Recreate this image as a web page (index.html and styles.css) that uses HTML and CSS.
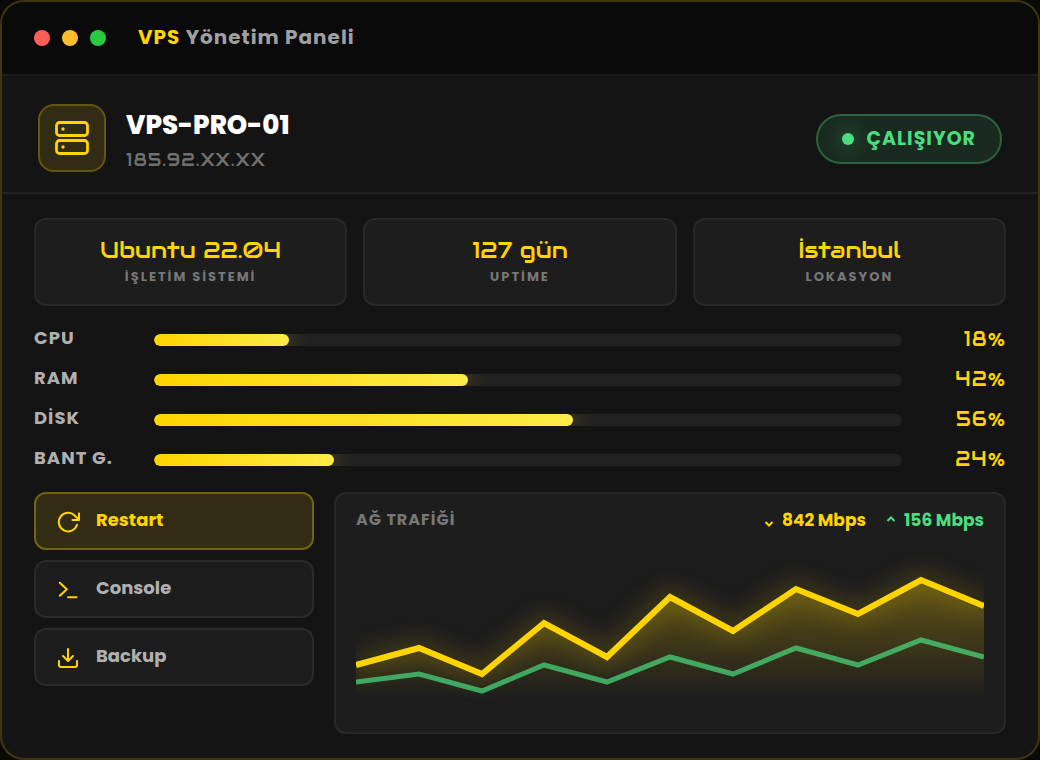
FILE: index.html
```
<!DOCTYPE html>
<html lang="tr">
<head>
<meta charset="utf-8">
<meta name="viewport" content="width=device-width, initial-scale=1">
<title>VPS Yönetim Paneli</title>
<link rel="stylesheet" href="styles.css">
</head>
<body>
<main class="panel">
  <header class="titlebar">
    <div class="dots"><span class="dot dot-red"></span><span class="dot dot-amber"></span><span class="dot dot-green"></span></div>
    <h1 class="title"><span class="accent">VPS</span> Yönetim Paneli</h1>
  </header>

  <section class="server">
    <div class="server-icon">
      <svg width="40" height="40" viewBox="0 0 40 40" fill="none" stroke="currentColor" stroke-width="2.8" stroke-linejoin="round" aria-hidden="true">
        <rect x="4.500" y="4.500" width="31" height="13" rx="3"/>
        <rect x="4.500" y="22.500" width="31" height="13" rx="3"/>
        <circle cx="11" cy="11" r="1.700" fill="currentColor" stroke="none"/>
        <circle cx="11" cy="29" r="1.700" fill="currentColor" stroke="none"/>
      </svg>
    </div>
    <div class="server-text">
      <h2 class="server-name">VPS-PRO-01</h2>
      <p class="server-ip">185.92.XX.XX</p>
    </div>
    <div class="status"><span class="status-dot"></span><span class="status-label">ÇALIŞIYOR</span></div>
  </section>

  <div class="content">
    <section class="stats">
      <div class="card stat"><p class="stat-value">Ubuntu 22.04</p><p class="stat-label">İŞLETİM SİSTEMİ</p></div>
      <div class="card stat"><p class="stat-value">127 gün</p><p class="stat-label">UPTİME</p></div>
      <div class="card stat"><p class="stat-value">İstanbul</p><p class="stat-label">LOKASYON</p></div>
    </section>

    <section class="meters">
      <div class="meter-row"><span class="meter-label" id="m-cpu">CPU</span><div class="track" role="progressbar" aria-labelledby="m-cpu" aria-valuenow="18"><div class="fill" style="width:18%"></div></div><span class="meter-value">18%</span></div>
      <div class="meter-row"><span class="meter-label" id="m-ram">RAM</span><div class="track" role="progressbar" aria-labelledby="m-ram" aria-valuenow="42"><div class="fill" style="width:42%"></div></div><span class="meter-value">42%</span></div>
      <div class="meter-row"><span class="meter-label" id="m-disk">DİSK</span><div class="track" role="progressbar" aria-labelledby="m-disk" aria-valuenow="56"><div class="fill" style="width:56%"></div></div><span class="meter-value">56%</span></div>
      <div class="meter-row"><span class="meter-label" id="m-net">BANT G.</span><div class="track" role="progressbar" aria-labelledby="m-net" aria-valuenow="24"><div class="fill" style="width:24%"></div></div><span class="meter-value">24%</span></div>
    </section>

    <section class="bottom">
      <div class="actions">
        <button type="button" class="action action-primary">
          <svg class="action-icon" viewBox="0 0 24 24" aria-hidden="true"><path d="M23 3.500v6.500h-6.500M21 14.800A9.300 9.300 0 1 1 18.700 5.500L23 10"/></svg>
          <span>Restart</span>
        </button>
        <button type="button" class="action">
          <svg class="action-icon" viewBox="0 0 24 24" aria-hidden="true"><path d="M3.800 4.800l7 6.500-7 6.500M12 19.200h8.500"/></svg>
          <span>Console</span>
        </button>
        <button type="button" class="action">
          <svg class="action-icon" viewBox="0 0 24 24" aria-hidden="true"><path d="M3 15v4a2 2 0 0 0 2 2h14a2 2 0 0 0 2-2V15M7 10l5 5 5-5M12 15V3"/></svg>
          <span>Backup</span>
        </button>
      </div>

      <div class="card chart-card">
        <div class="chart-head">
          <h3 class="chart-title">AĞ TRAFİĞİ</h3>
          <div class="rates">
            <span class="rate rate-down"><svg class="chevron" viewBox="0 0 10 20" aria-hidden="true"><path d="M1.500 12L5 15.500 8.500 12"/></svg>842 Mbps</span>
            <span class="rate rate-up"><svg class="chevron" viewBox="0 0 10 20" aria-hidden="true"><path d="M1.500 11L5 7.500 8.500 11"/></svg>156 Mbps</span>
          </div>
        </div>
        <svg class="chart" viewBox="0 0 628 170" preserveAspectRatio="none" role="img" aria-label="Ağ trafiği">
          <defs>
            <linearGradient id="area" x1="0" y1="0" x2="0" y2="1">
              <stop offset="0" stop-color="#ffd500" stop-opacity=".3"/>
              <stop offset="1" stop-color="#ffd500" stop-opacity="0"/>
            </linearGradient>
          </defs>
          <path fill="url(#area)" d="M0 123L63 106 126 132 188 81 251 115 314 55 377 89 440 47 502 72 565 38 628 64V157H0Z"/>
          <path class="line line-down" d="M0 123L63 106 126 132 188 81 251 115 314 55 377 89 440 47 502 72 565 38 628 64"/>
          <path class="line line-up" d="M0 140L63 132 126 149 188 123 251 140 314 115 377 132 440 106 502 123 565 98 628 115"/>
        </svg>
      </div>
    </section>
  </div>
</main>
</body>
</html>
```
FILE: styles.css
```
:root {
  --yellow: #ffd500;
  --green: #4ade80;
  --sans: Poppins, Inter, "Liberation Sans", sans-serif;
  --wide: Audiowide, Orbitron, "DejaVu Sans", sans-serif;
}
* { box-sizing: border-box; }
body, h1, h2, h3, p { margin: 0; }
body {
  background: #0a0905;
  color: #fff;
  font-family: var(--sans);
}
.panel {
  display: flex;
  flex-direction: column;
  min-height: 100vh;
  border: 2px solid #40370f;
  border-radius: 24px;
  background: #141414;
  overflow: hidden;
}

.titlebar {
  display: flex;
  align-items: center;
  gap: 32px;
  padding: 20px 32px 22px;
  background: #0a0a0a;
  border-bottom: 2px solid #1b1b1b;
}
.dots { display: flex; gap: 12px; padding-top: 2px; }
.dot { width: 16px; height: 16px; border-radius: 50%; }
.dot-red { background: #ff5f57; }
.dot-amber { background: #ffbd2e; }
.dot-green { background: #28ca42; }
.title { font-size: 20px; line-height: 30px; font-weight: 700; letter-spacing: 1px; color: #a0a0a0; }
.accent { color: var(--yellow); }

.server {
  display: flex;
  align-items: center;
  gap: 20px;
  padding: 28px 36px 18px;
  border-bottom: 2px solid #222;
}
.server-icon {
  display: grid;
  place-items: center;
  align-self: flex-start;
  width: 68px;
  height: 68px;
  border: 2px solid #66560f;
  border-radius: 16px;
  background: #332c14;
  color: var(--yellow);
}
.server-text { flex: 1; }
.server-name { font-size: 26px; line-height: 42px; font-weight: 800; }
.server-ip { font-family: var(--wide); font-size: 18px; line-height: 28px; font-weight: 400; letter-spacing: 1px; color: #707070; }
.status {
  display: flex;
  align-items: center;
  gap: 12px;
  padding: 8px 24px;
  border: 2px solid #2b633f;
  border-radius: 25px;
  background: #1a2a20;
  color: var(--green);
}
.status-dot {
  width: 12px;
  height: 12px;
  border-radius: 50%;
  background: var(--green);
  box-shadow: 0 0 20px rgba(74, 222, 128, .6);
}
.status-label { font-size: 19px; line-height: 30px; font-weight: 700; letter-spacing: 1px; }

.content { flex: 1; display: flex; flex-direction: column; padding: 24px 32px; }
.card { background: #1d1d1d; border: 2px solid #282828; border-radius: 12px; }
.stats { display: grid; grid-template-columns: repeat(3, 1fr); gap: 16px; }
.stat { padding: 14px 16px 16px; text-align: center; }
.stat-value { font-family: var(--wide); font-size: 23px; line-height: 32px; font-weight: 400; color: var(--yellow); }
.stat-label { font-size: 13px; line-height: 22px; font-weight: 700; letter-spacing: 2px; color: #777; }

.meters { display: grid; gap: 12px; margin: 20px 0 18px; }
.meter-row { display: grid; grid-template-columns: 104px 1fr 88px; gap: 16px; align-items: center; line-height: 28px; }
.meter-label { padding-bottom: 4px; font-size: 18px; line-height: 24px; font-weight: 700; letter-spacing: 1px; color: #b0b0b0; white-space: nowrap; }
.track { height: 12px; border-radius: 6px; background: #222; overflow: hidden; }
.fill {
  height: 100%;
  border-radius: 6px;
  background: linear-gradient(90deg, var(--yellow), #ffeb4a);
  box-shadow: 0 0 24px rgba(255, 213, 0, .4);
}
.meter-value { padding-bottom: 2px; font-family: var(--wide); font-size: 20px; line-height: 26px; font-weight: 400; letter-spacing: 1px; color: var(--yellow); text-align: right; }
.meter-row { min-height: 28px; }

.bottom { flex: 1; display: grid; grid-template-columns: 280px 1fr; gap: 20px; }
.actions { display: flex; flex-direction: column; gap: 10px; }
.action {
  display: flex;
  align-items: center;
  gap: 16px;
  padding: 12px 20px 14px;
  border: 2px solid #2a2a2a;
  border-radius: 12px;
  background: #1d1d1d;
  color: #b0b0b0;
  font: 700 18px/28px var(--sans);
  text-align: left;
  cursor: pointer;
}
.action-primary { border-color: #75630b; background: #332c14; color: var(--yellow); }
.action-icon {
  width: 24px;
  height: 24px;
  margin-top: 4px;
  fill: none;
  stroke: var(--yellow);
  stroke-width: 2;
  stroke-linecap: round;
  stroke-linejoin: round;
}

.chart-card { display: flex; flex-direction: column; gap: 8px; min-width: 0; padding: 12px 20px 20px; }
.chart-head { display: flex; justify-content: space-between; align-items: center; line-height: 28px; }
.chart-title { font-size: 16px; font-weight: 700; letter-spacing: 1px; color: #777; }
.rates { display: flex; gap: 20px; }
.rate { display: flex; align-items: center; gap: 8px; font-size: 17px; font-weight: 700; white-space: nowrap; }
.rate-down { color: var(--yellow); }
.rate-up { color: var(--green); }
.chevron { width: 10px; height: 20px; fill: none; stroke: currentColor; stroke-width: 2; }
.chart { flex: 1; display: block; width: 100%; height: 170px; overflow: hidden; }
.line { fill: none; stroke-width: 5; }
.line-down { stroke: var(--yellow); stroke-width: 6; filter: drop-shadow(0 0 12px rgba(255, 213, 0, .5)); }
.line-up { stroke: var(--green); opacity: .7; }
```
